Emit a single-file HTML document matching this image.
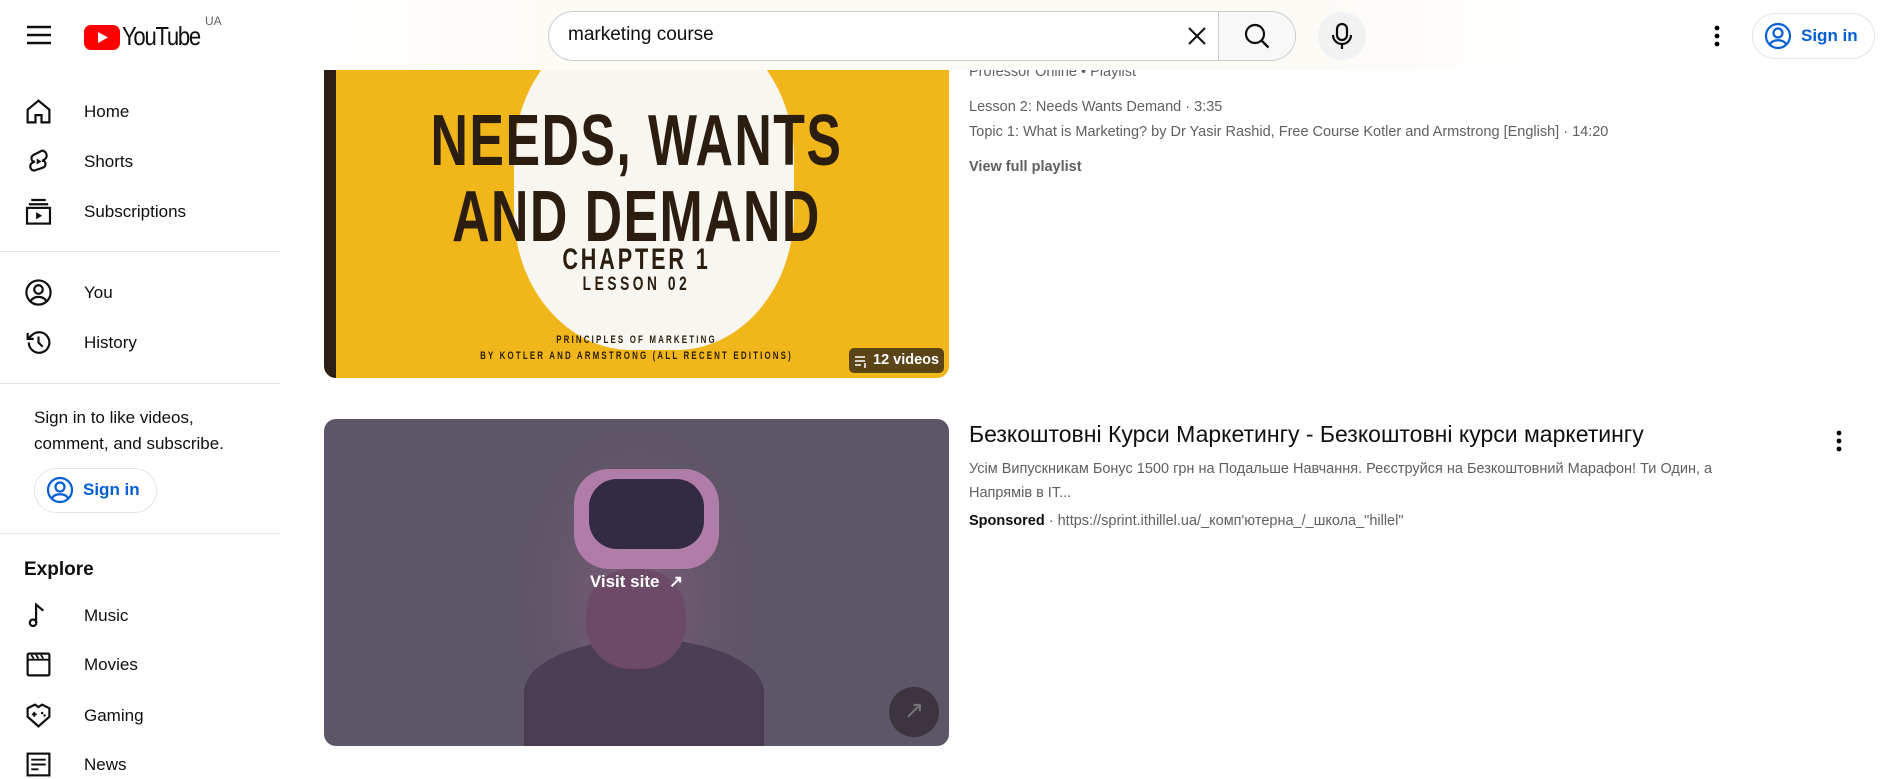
<!DOCTYPE html>
<html><head><meta charset="utf-8"><style>
*{margin:0;padding:0;box-sizing:border-box}
body{width:1887px;height:765px;overflow:hidden;background:#fff;font-family:"Liberation Sans",Arial,sans-serif;color:#0f0f0f;position:relative}
.abs{position:absolute}
.side{font-size:17px}
.item{position:absolute;left:24px;display:flex;align-items:center}
.item svg{width:29px;height:29px}
.item span{position:absolute;left:60px;white-space:nowrap}
.hr{position:absolute;left:0;width:280px;height:1px;background:#e5e5e5}
.gray{color:#606060;font-size:14.5px}
.cond{transform:scaleX(.72);transform-origin:center}
</style></head><body>
<div class="abs" style="left:0;top:0;width:1887px;height:70px;background:#fff;z-index:5">
 <div class="abs" style="left:300px;top:0;width:1270px;height:70px;background:linear-gradient(90deg,#fff,#fdfbf6 20%,#fdfbf6 80%,#fff)"></div>
 <svg class="abs" style="left:26px;top:24px" width="26" height="22" viewBox="0 0 26 22"><path d="M1 3h24M1 11h24M1 19h24" stroke="#0f0f0f" stroke-width="2.4"/></svg>
 <svg class="abs" style="left:84px;top:25px" width="36" height="25" viewBox="0 0 36 25"><rect width="36" height="25" rx="7" fill="#f00"/><path d="M14 7l10 5.5-10 5.5z" fill="#fff"/></svg>
 <div class="abs" style="left:122px;top:21px;font-size:26px;letter-spacing:-1.5px;transform:scaleX(.85);transform-origin:left">YouTube</div>
 <div class="abs" style="left:205px;top:14px;font-size:12px;color:#606060">UA</div>
 <div class="abs" style="left:548px;top:11px;width:670px;height:50px;border:1px solid #ccc;border-right:none;border-radius:25px 0 0 25px;background:#fff"></div>
 <div class="abs" style="left:568px;top:24px;font-size:19px">marketing course</div>
 <svg class="abs" style="left:1185px;top:24px" width="24" height="24" viewBox="0 0 24 24"><path d="M4 4l16 16M20 4L4 20" stroke="#0f0f0f" stroke-width="2"/></svg>
 <div class="abs" style="left:1218px;top:11px;width:78px;height:50px;border:1px solid #ccc;border-radius:0 25px 25px 0;background:#f8f8f8"></div>
 <svg class="abs" style="left:1243px;top:22px" width="28" height="28" viewBox="0 0 28 28"><circle cx="12" cy="12" r="9" fill="none" stroke="#0f0f0f" stroke-width="2.2"/><path d="M18.5 18.5l7 7" stroke="#0f0f0f" stroke-width="2.4"/></svg>
 <div class="abs" style="left:1318px;top:12px;width:48px;height:48px;border-radius:50%;background:#f2f2f2"></div>
 <svg class="abs" style="left:1330px;top:22px" width="24" height="28" viewBox="0 0 24 28"><rect x="7" y="2" width="10" height="16" rx="5" fill="none" stroke="#0f0f0f" stroke-width="2.2"/><path d="M3 13a9 9 0 0018 0M12 22v5" fill="none" stroke="#0f0f0f" stroke-width="2.2"/></svg>
 <svg class="abs" style="left:1713px;top:24px" width="8" height="24" viewBox="0 0 8 24"><circle cx="4" cy="4" r="2.4"/><circle cx="4" cy="12" r="2.4"/><circle cx="4" cy="20" r="2.4"/></svg>
 <div class="abs" style="left:1752px;top:13px;width:123px;height:46px;border:1px solid #e5e5e5;border-radius:23px"></div>
 <svg class="abs" style="left:1764px;top:22px" width="28" height="28" viewBox="0 0 28 28"><circle cx="14" cy="14" r="12" fill="none" stroke="#065fd4" stroke-width="2.2"/><circle cx="14" cy="11" r="4.5" fill="none" stroke="#065fd4" stroke-width="2.2"/><path d="M6 22c3-5 13-5 16 0" fill="none" stroke="#065fd4" stroke-width="2.2"/></svg>
 <div class="abs" style="left:1801px;top:26px;font-size:17px;color:#065fd4;font-weight:bold">Sign in</div>
</div>
<div class="side">
 <div class="item" style="top:97px"><svg viewBox="0 0 24 24"><path d="M3 10.5L12 3l9 7.5V21h-6.5v-6h-5v6H3z" fill="none" stroke="#0f0f0f" stroke-width="1.8"/></svg><span>Home</span></div>
 <div class="item" style="top:147px"><svg viewBox="0 0 24 24"><path d="M15 3l-7 3.5c-3 1.7-2 6 1 5.5L7 13c-3 1.7-2 6.5 1.5 6.5L16 17c3-1.7 2-6-1-5.5l2-1.2c3-1.7 2-7-2-7.3z" fill="none" stroke="#0f0f0f" stroke-width="1.8"/><path d="M10.5 9.5v5l4-2.5z" fill="#0f0f0f"/></svg><span>Shorts</span></div>
 <div class="item" style="top:197px"><svg viewBox="0 0 24 24"><path d="M6 2.5h12M4 6h16" stroke="#0f0f0f" stroke-width="1.8"/><rect x="2.5" y="9" width="19" height="13" fill="none" stroke="#0f0f0f" stroke-width="1.8"/><path d="M10 12.5v6l5-3z" fill="#0f0f0f"/></svg><span>Subscriptions</span></div>
 <div class="hr" style="top:251px"></div>
 <div class="item" style="top:278px"><svg viewBox="0 0 24 24"><circle cx="12" cy="12" r="10" fill="none" stroke="#0f0f0f" stroke-width="1.8"/><circle cx="12" cy="9.5" r="3.5" fill="none" stroke="#0f0f0f" stroke-width="1.8"/><path d="M5.5 19c3-4.5 10-4.5 13 0" fill="none" stroke="#0f0f0f" stroke-width="1.8"/></svg><span>You</span></div>
 <div class="item" style="top:328px"><svg viewBox="0 0 24 24"><path d="M4 12a8.5 8.5 0 102.5-6L3 9M3 4v5h5" fill="none" stroke="#0f0f0f" stroke-width="1.8"/><path d="M12 7v5l3.5 3.5" fill="none" stroke="#0f0f0f" stroke-width="1.8"/></svg><span>History</span></div>
 <div class="hr" style="top:383px"></div>
 <div class="abs" style="left:34px;top:405px;line-height:26px">Sign in to like videos,<br>comment, and subscribe.</div>
 <div class="abs" style="left:34px;top:468px;width:123px;height:45px;border:1px solid #e5e5e5;border-radius:23px"></div>
 <svg class="abs" style="left:46px;top:476px" width="28" height="28" viewBox="0 0 28 28"><circle cx="14" cy="14" r="12" fill="none" stroke="#065fd4" stroke-width="2.2"/><circle cx="14" cy="11" r="4.5" fill="none" stroke="#065fd4" stroke-width="2.2"/><path d="M6 22c3-5 13-5 16 0" fill="none" stroke="#065fd4" stroke-width="2.2"/></svg>
 <div class="abs" style="left:83px;top:480px;color:#065fd4;font-weight:bold">Sign in</div>
 <div class="hr" style="top:533px"></div>
 <div class="abs" style="left:24px;top:559px;font-size:19px;font-weight:bold">Explore</div>
 <div class="item" style="top:601px"><svg viewBox="0 0 24 24"><path d="M10 18V3l6 5" fill="none" stroke="#0f0f0f" stroke-width="1.8"/><circle cx="7.5" cy="18" r="2.7" fill="none" stroke="#0f0f0f" stroke-width="1.8"/></svg><span>Music</span></div>
 <div class="item" style="top:650px"><svg viewBox="0 0 24 24"><rect x="3" y="3" width="18" height="18" rx="1" fill="none" stroke="#0f0f0f" stroke-width="1.8"/><path d="M3 8h18M6 4l2 3M10 4l2 3M14 4l2 3" stroke="#0f0f0f" stroke-width="1.5"/></svg><span>Movies</span></div>
 <div class="item" style="top:701px"><svg viewBox="0 0 24 24"><path d="M12 5l-3-2-6 3v7l9 8 9-8V6l-6-3z" fill="none" stroke="#0f0f0f" stroke-width="1.8"/><path d="M6.5 11h4M8.5 9v4" stroke="#0f0f0f" stroke-width="1.6"/><circle cx="15" cy="10" r="1" /><circle cx="17" cy="12" r="1"/></svg><span>Gaming</span></div>
 <div class="item" style="top:750px"><svg viewBox="0 0 24 24"><rect x="3" y="3" width="18" height="18" fill="none" stroke="#0f0f0f" stroke-width="1.8"/><path d="M6 8h12M6 12h12M6 16h6" stroke="#0f0f0f" stroke-width="1.6"/></svg><span>News</span></div>
</div>
<div class="abs" style="left:324px;top:40px;width:625px;height:338px;border-radius:12px;overflow:hidden;background:#f1b71a">
 <div class="abs" style="left:0;top:0;width:12px;height:338px;background:#2a1f12"></div>
 <div class="abs" style="left:190px;top:-20px;width:280px;height:330px;background:#f8f6f0;border-radius:42%"></div>
 <div class="abs cond" style="left:0;width:625px;top:63px;text-align:center;font:bold 72px/76px 'Liberation Sans',sans-serif;color:#2b1d10;letter-spacing:2px">NEEDS, WANTS<br>AND DEMAND</div>
 <div class="abs cond" style="left:0;width:625px;top:203px;text-align:center;font:bold 30px 'Liberation Sans',sans-serif;color:#2b1d10;letter-spacing:4px">CHAPTER 1</div>
 <div class="abs cond" style="left:0;width:625px;top:234px;text-align:center;font:bold 19px 'Liberation Sans',sans-serif;color:#2b1d10;letter-spacing:5px">LESSON 02</div>
 <div class="abs cond" style="left:0;width:625px;top:292px;text-align:center;font:bold 11px sans-serif;color:#2b1d10;letter-spacing:3px;line-height:16px">PRINCIPLES OF MARKETING<br>BY KOTLER AND ARMSTRONG (ALL RECENT EDITIONS)</div>
 <div class="abs" style="left:525px;top:308px;width:95px;height:25px;border-radius:5px;background:rgba(40,30,20,.75);color:#fff;font:bold 14.5px sans-serif;padding:4px 0 0 24px">12 videos</div>
 <svg class="abs" style="left:530px;top:314px" width="14" height="14" viewBox="0 0 14 14"><path d="M1 3h10M1 7h10M1 11h6M11 9v5" stroke="#fff" stroke-width="1.5"/></svg>
</div>
<div class="abs gray" style="left:969px;top:64px">Professor Online • Playlist</div>
<div class="abs gray" style="left:969px;top:99px">Lesson 2: Needs Wants Demand · 3:35</div>
<div class="abs gray" style="left:969px;top:124px">Topic 1: What is Marketing? by Dr Yasir Rashid, Free Course Kotler and Armstrong [English] · 14:20</div>
<div class="abs gray" style="left:969px;top:159px;font-weight:bold">View full playlist</div>
<div class="abs" style="left:324px;top:419px;width:625px;height:327px;border-radius:12px;overflow:hidden;background:radial-gradient(ellipse 140px 200px at 312px 180px,#7a5a78,#5f5667 70%,#5c5666)">
 <div class="abs" style="left:250px;top:50px;width:145px;height:100px;border-radius:35px;background:#b07ca8"></div>
 <div class="abs" style="left:265px;top:60px;width:115px;height:70px;border-radius:28px;background:#332a44"></div>
 <div class="abs" style="left:200px;top:220px;width:240px;height:107px;border-radius:50% 50% 0 0;background:#4a3e55"></div>
 <div class="abs" style="left:262px;top:150px;width:100px;height:100px;border-radius:45%;background:#6d4a68"></div>
 <div class="abs" style="left:0;width:625px;top:153px;text-align:center;color:#fff;font-weight:bold;font-size:17px">Visit site &nbsp;↗</div>
 <div class="abs" style="left:565px;top:268px;width:50px;height:50px;border-radius:50%;background:#3c3540;color:#777;font-size:24px;text-align:center;line-height:48px">↗</div>
</div>
<div class="abs" style="left:969px;top:421px;font-size:23px">Безкоштовні Курси Маркетингу - Безкоштовні курси маркетингу</div>
<svg class="abs" style="left:1835px;top:429px" width="8" height="24" viewBox="0 0 8 24"><circle cx="4" cy="4" r="2.4"/><circle cx="4" cy="12" r="2.4"/><circle cx="4" cy="20" r="2.4"/></svg>
<div class="abs gray" style="left:969px;top:457px;line-height:24px">Усім Випускникам Бонус 1500 грн на Подальше Навчання. Реєструйся на Безкоштовний Марафон! Ти Один, а<br>Напрямів в IT...</div>
<div class="abs gray" style="left:969px;top:513px"><b style="color:#0f0f0f">Sponsored</b> · https://sprint.ithillel.ua/_комп'ютерна_/_школа_"hillel"</div>
</body></html>
